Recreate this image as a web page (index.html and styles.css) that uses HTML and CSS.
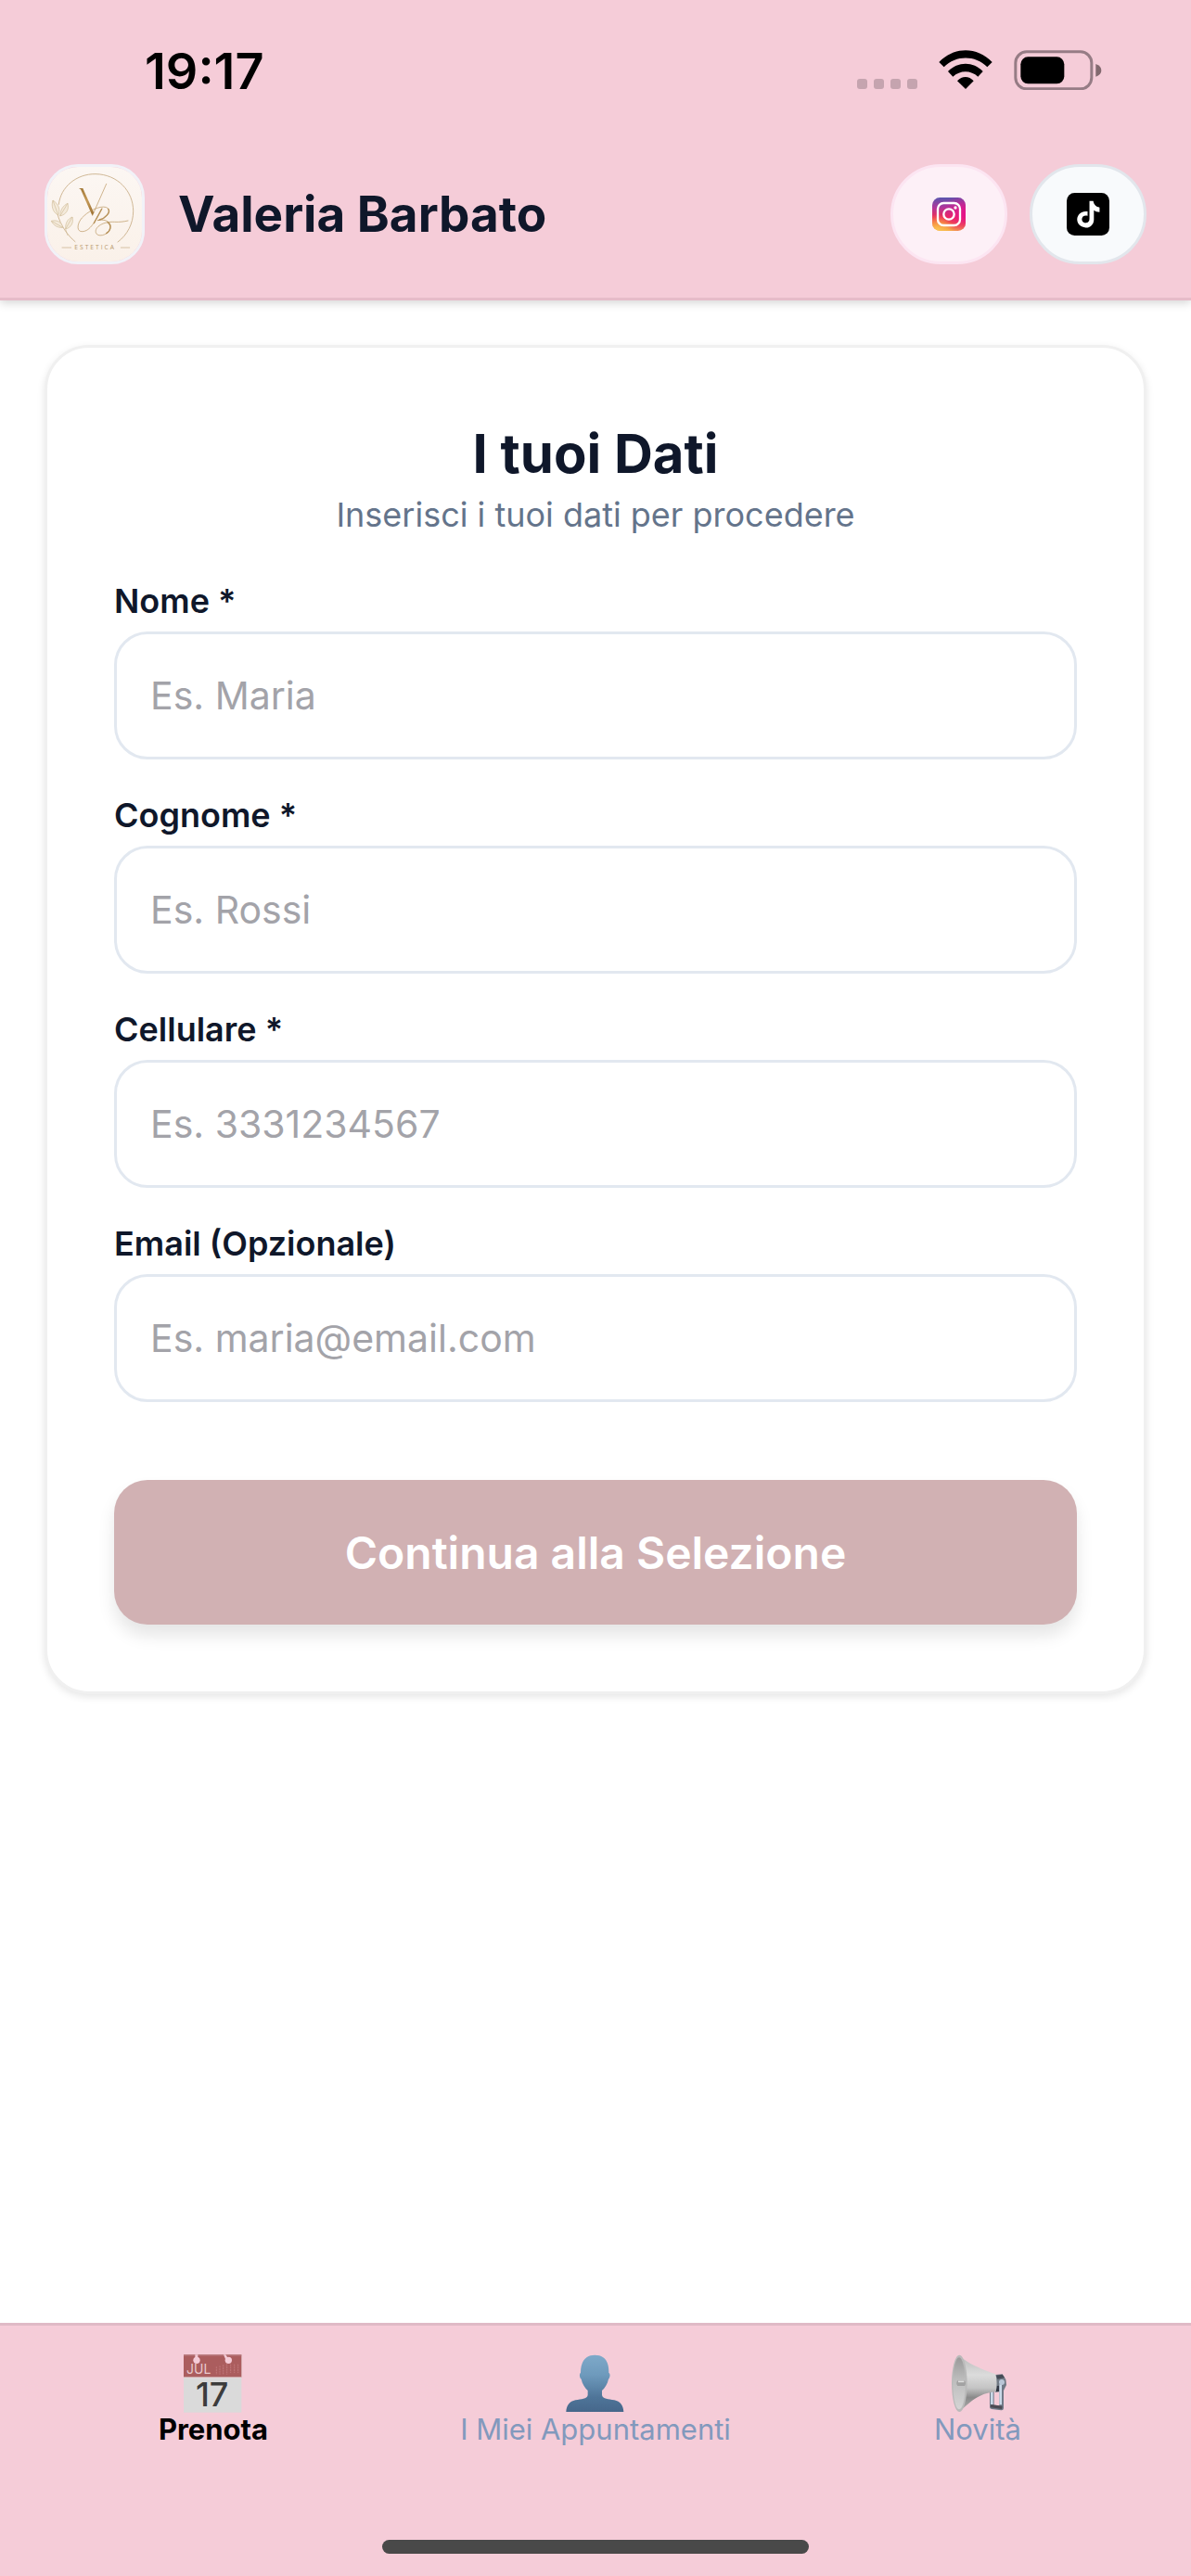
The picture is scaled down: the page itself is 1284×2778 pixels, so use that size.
FILE: index.html
```html
<!DOCTYPE html>
<html lang="it">
<head>
<meta charset="utf-8">
<meta name="viewport" content="width=device-width, initial-scale=1">
<title>Valeria Barbato</title>
<link rel="stylesheet" href="styles.css">
</head>
<body>
<header class="header">
  <div class="status">
    <time class="status-time">19:17</time>
    <div class="status-icons">
      <svg class="signal" viewBox="0 0 65 43" aria-hidden="true">
        <g fill="#c5a4af"><rect y="31" width="11" height="11" rx="3"/><rect x="18" y="31" width="11" height="11" rx="3"/><rect x="36" y="31" width="11" height="11" rx="3"/><rect x="54" y="31" width="11" height="11" rx="3"/></g>
      </svg>
      <svg class="wifi" viewBox="398 162 174 129" aria-hidden="true">
        <path d="M399 201C448 150 522 150 571 201L555 217C516 178 454 178 415 217Z"/>
        <path d="M428 231C460 198 510 198 541 231L525 248C502 226 467 226 444 248Z"/>
        <path d="M458 262C473 245 496 245 511 262L485 288Z"/>
      </svg>
      <svg class="battery" viewBox="638 161 285 129" aria-hidden="true">
        <rect x="643.500" y="166.500" width="246" height="120" rx="36" fill="none" stroke="#967c85" stroke-width="9"/>
        <rect x="660" y="183" width="141" height="87" rx="24"/>
        <path d="M903 206Q921 212 921 227Q921 241 903 247Z" fill="#82696f"/>
      </svg>
    </div>
  </div>
  <div class="brand">
    <svg class="logo" viewBox="63 60 306 306" role="img" aria-label="Logo VB Estetica">
      <defs>
        <linearGradient id="paper" x1="0" y1="0" x2="0" y2="1"><stop offset="0" stop-color="#fcf7f3"/><stop offset="1" stop-color="#faf1e9"/></linearGradient>
        <linearGradient id="gold" x1="0" y1="0" x2="1" y2="1"><stop offset="0" stop-color="#9d7434"/><stop offset=".5" stop-color="#c59a58"/><stop offset="1" stop-color="#96692b"/></linearGradient>
      </defs>
      <rect x="63" y="60" width="306" height="306" fill="url(#paper)"/>
      <g fill="none" stroke="#c6ab83" stroke-width="2.500" stroke-linecap="round">
        <path d="M100 181C106 125 157 82 219 83C291 84 341 139 341 203C341 243 322 280 291 303"/>
        <path d="M153 302C129 282 105 249 96 212"/>
        <path d="M111 321H140M301 321H329" stroke-width="2"/>
      </g>
      <g fill="#f4eadb" stroke="#d0bc98" stroke-width="2">
        <path d="M98 216C78 205 76 183 81 168C99 180 107 197 98 216Z"/>
        <path d="M104 219C106 198 114 185 129 178C134 199 124 214 104 219Z"/>
        <path d="M113 256C98 258 82 249 76 235C95 230 110 239 113 256Z"/>
        <path d="M122 261C121 241 129 228 144 222C149 241 140 256 122 261Z"/>
        <path d="M81 168L98 216M129 178L104 219M76 235L113 256M144 222L122 261M122 261L129 282" fill="none"/>
      </g>
      <path d="M165 129H178L214 209L208 217L171 133Z" fill="url(#gold)"/>
      <g fill="none" stroke="#b8935a" stroke-linecap="round">
        <path d="M209 217L254 115" stroke-width="2"/>
        <path d="M240 194C217 237 202 268 176 269C155 270 159 238 181 219C204 197 245 181 259 194C272 207 251 230 225 233C257 226 274 244 266 262C257 282 224 289 220 272C216 254 244 236 280 238C297 239 310 237 324 234" stroke-width="2"/>
        <path d="M239 196L214 242M260 196C268 207 251 226 232 231M258 239C272 249 268 266 254 275" stroke-width="4"/>
      </g>
      <text class="logo-text" x="151" y="328">ESTETICA</text>
    </svg>
    <h1 class="brand-name">Valeria Barbato</h1>
    <nav class="social" aria-label="Social">
      <a class="social-link instagram" href="#instagram" aria-label="Instagram">
        <svg class="instagram-icon" viewBox="0 0 108 108" aria-hidden="true">
          <defs>
            <linearGradient id="ig" x1="0" y1="0" x2="0" y2="1"><stop offset="0" stop-color="#5955ae"/><stop offset=".3" stop-color="#b0379b"/><stop offset=".6" stop-color="#ee2c55"/><stop offset=".82" stop-color="#f36a38"/><stop offset="1" stop-color="#f6b04a"/></linearGradient>
            <radialGradient id="pink" cx=".95" cy=".5" r=".65"><stop offset="0" stop-color="#e5138b"/><stop offset="1" stop-color="#e5138b" stop-opacity="0"/></radialGradient>
            <radialGradient id="sun" cx=".15" cy="1" r=".5"><stop offset="0" stop-color="#fbc451"/><stop offset="1" stop-color="#fbc451" stop-opacity="0"/></radialGradient>
          </defs>
          <rect width="108" height="108" rx="25" fill="url(#ig)"/><rect width="108" height="108" rx="25" fill="url(#pink)"/><rect width="108" height="108" rx="25" fill="url(#sun)"/>
          <g fill="none" stroke="#fff" stroke-width="7"><rect x="18" y="18" width="72" height="72" rx="19"/><circle cx="54" cy="54" r="17"/></g>
          <circle cx="75" cy="33" r="5" fill="#fff"/>
        </svg>
      </a>
      <a class="social-link tiktok" href="#tiktok" aria-label="TikTok">
        <svg class="tiktok-icon" viewBox="0 0 135 135" aria-hidden="true">
          <rect width="135" height="135" rx="25"/>
          <path d="M72 26H84C86 38 93 45 104 46V61C97 61 90 58 86 55V85C85 102 73 111 60 110C45 109 33 99 33 84C34 67 47 56 66 59V73C56 70 48 75 48 84C48 91 54 96 61 95C68 94 72 89 72 82Z" fill="#fff"/>
        </svg>
      </a>
    </nav>
  </div>
</header>

<main class="main">
  <form class="card">
    <h2 class="card-title">I tuoi Dati</h2>
    <p class="card-subtitle">Inserisci i tuoi dati per procedere</p>
    <div class="fields">
      <div class="field">
        <label class="label" for="nome">Nome *</label>
        <input class="input" id="nome" type="text" placeholder="Es. Maria">
      </div>
      <div class="field">
        <label class="label" for="cognome">Cognome *</label>
        <input class="input" id="cognome" type="text" placeholder="Es. Rossi">
      </div>
      <div class="field">
        <label class="label" for="cellulare">Cellulare *</label>
        <input class="input" id="cellulare" type="tel" placeholder="Es. 3331234567">
      </div>
      <div class="field">
        <label class="label" for="email">Email (Opzionale)</label>
        <input class="input" id="email" type="email" placeholder="Es. maria@email.com">
      </div>
    </div>
    <button class="submit" type="submit">Continua alla Selezione</button>
  </form>
</main>

<footer class="footer">
  <nav class="tabs" aria-label="Navigazione principale">
    <a class="tab tab-active" href="#prenota" aria-current="page">
      <svg class="tab-icon" viewBox="175 144 189 189" aria-hidden="true">
        <rect x="172" y="148" width="187" height="187" fill="#dadada"/>
        <path d="M172 148H359V221H172Z" fill="#ab5d5e"/>
        <path d="M172 150H359" stroke="#bd8085" stroke-width="3"/>
        <path d="M172 222H359" stroke="#e7d5d7" stroke-width="3"/>
        <g fill="#f5ccd8"><circle cx="214" cy="166" r="11"/><circle cx="317" cy="166" r="11"/><path d="M209 148H218V160H209ZM301 148H308L316 160L308 164Z"/></g>
        <path d="M278 187V212M289 184V212M300 181V212M312 178V212M324 179V207M336 179V207M348 179V207" stroke="#c07779" stroke-width="3" stroke-dasharray="6 2"/>
        <text class="cal-month" x="181" y="211">JUL</text>
        <text class="cal-day" x="264" y="316">17</text>
      </svg>
      <span>Prenota</span>
    </a>
    <a class="tab" href="#appuntamenti">
      <svg class="tab-icon" viewBox="391 144 189 189" aria-hidden="true">
        <defs><linearGradient id="person" x1="0" y1="0" x2="0" y2="1"><stop offset="0" stop-color="#7ea9c9"/><stop offset=".35" stop-color="#6e9abc"/><stop offset=".75" stop-color="#4e7498"/><stop offset="1" stop-color="#46678b"/></linearGradient></defs>
        <path d="M482 149C512 149 528 168 527 207C533 209 531 223 526 227C523 243 514 255 505 264V279C508 292 526 291 545 295C564 299 574 312 575 333H389C390 312 400 299 419 295C438 291 456 292 459 279V264C450 255 441 243 438 227C432 223 431 209 436 207C436 168 453 149 482 149Z" fill="url(#person)"/>
      </svg>
      <span>I Miei Appuntamenti</span>
    </a>
    <a class="tab" href="#novita">
      <svg class="tab-icon" viewBox="127 144 189 189" aria-hidden="true">
        <defs>
          <linearGradient id="horn" x1="0" y1="0" x2="0" y2="1"><stop offset="0" stop-color="#b9b9b9"/><stop offset=".35" stop-color="#dcdcdc"/><stop offset=".58" stop-color="#c4c4c4"/><stop offset=".75" stop-color="#898989"/><stop offset="1" stop-color="#b4b4b4"/></linearGradient>
          <linearGradient id="bell" x1="0" y1="0" x2="0" y2="1"><stop offset="0" stop-color="#999"/><stop offset=".4" stop-color="#bbb"/><stop offset="1" stop-color="#d5d5d5"/></linearGradient>
        </defs>
        <path d="M277 213L300 211L311 228L313 246L303 266L277 270Z" fill="#707984"/>
        <path d="M280 215L300 212L307 222L284 227Z" fill="#454b56"/>
        <path d="M282 249L291 248V267H279Z" fill="#323844"/>
        <path d="M266 262V317L297 321V237" fill="none" stroke="#707987" stroke-width="14" stroke-linejoin="round"/>
        <path d="M266 263V310M294 244V310" fill="none" stroke="#cad9e8" stroke-width="8"/>
        <path d="M262 314L299 319" stroke="#4d4b54" stroke-width="10"/>
        <circle cx="298" cy="237" r="9" fill="#b9c6d7"/>
        <path d="M161 149C175 166 206 186 278 211Q285 238 279 268C222 272 193 304 161 333Z" fill="url(#horn)"/>
        <ellipse cx="161" cy="241" rx="25" ry="92" fill="#bababa"/>
        <ellipse cx="160" cy="241" rx="20" ry="84" fill="url(#bell)"/>
        <path d="M155 232H178Q184 241 178 249H155Q148 241 155 232Z" fill="#a2a2a2"/>
        <path d="M157 235H176" stroke="#dedede" stroke-width="5"/>
      </svg>
      <span>Novità</span>
    </a>
  </nav>
  <div class="home-indicator"></div>
</footer>
</body>
</html>
```
FILE: styles.css
```css
* {
  box-sizing: border-box;
}

body {
  margin: 0;
  min-height: 100vh;
  display: flex;
  flex-direction: column;
  background: #fff;
  color: #0f172a;
  font-family: Inter, "Liberation Sans", sans-serif;
}

h1,
h2,
p {
  margin: 0;
}

svg {
  display: block;
}

/* Header */
.header {
  background: #f5ccd8;
  border-bottom: 3px solid #e6bcc9;
  box-shadow: 0 3px 9px rgba(0, 0, 0, 0.16);
}

.status {
  height: 141px;
  padding: 54px 96px 0 156px;
  display: flex;
  justify-content: space-between;
  align-items: flex-start;
}

.status-time {
  color: #000;
  font-size: 54px;
  font-weight: 600;
  line-height: 46px;
}

.status-icons {
  display: flex;
  gap: 23px;
}

.signal {
  width: 65px;
  height: 43px;
}

.wifi {
  width: 58px;
  height: 43px;
}

.battery {
  width: 95px;
  height: 43px;
}

.brand {
  padding: 36px 48px;
  display: flex;
  align-items: center;
}

.logo {
  width: 108px;
  height: 108px;
  border: 3px solid #f1f2f8;
  border-radius: 36px;
}

.logo-text {
  fill: #b8996b;
  font: 20px "Open Sans", sans-serif;
  letter-spacing: 6px;
}

.brand-name {
  flex: 1;
  margin-left: 36px;
  font-size: 53px;
  font-weight: 700;
  line-height: 66px;
}

.social {
  display: flex;
  gap: 24px;
}

.social-link {
  width: 126px;
  height: 108px;
  display: flex;
  align-items: center;
  justify-content: center;
  border: 3px solid;
  border-radius: 54px;
}

.instagram {
  background: #fdf0f7;
  border-color: #fce5f2;
}

.tiktok {
  background: #f8fafc;
  border-color: #e2e6ec;
}

.instagram-icon {
  width: 36px;
  height: 36px;
}

.tiktok-icon {
  width: 46px;
  height: 46px;
}

/* Form */
.main {
  flex: 1;
  padding: 48px;
}

.card {
  padding: 72px;
  background: #fff;
  border: 3px solid #f0f0f0;
  border-radius: 48px;
  box-shadow: 0 3px 9px rgba(0, 0, 0, 0.1);
}

.card-title {
  font-size: 58px;
  font-weight: 700;
  line-height: 84px;
  text-align: center;
}

.card-subtitle {
  margin-bottom: 45px;
  color: #64748b;
  font-size: 36px;
  line-height: 48px;
  text-align: center;
}

.fields {
  display: grid;
  gap: 36px;
}

.field {
  display: flex;
  flex-direction: column;
  gap: 9px;
}

.label {
  font-size: 36px;
  font-weight: 600;
  line-height: 48px;
}

.input {
  width: 100%;
  height: 138px;
  padding: 0 36px;
  background: #fff;
  border: 3px solid #e2e8f0;
  border-radius: 36px;
  color: #0f172a;
  font: 41px Inter, "Liberation Sans", sans-serif;
}

.input::placeholder {
  color: #a3a3a9;
  opacity: 1;
}

.submit {
  width: 100%;
  height: 156px;
  margin-top: 84px;
  background: #d1b1b3;
  border: 0;
  border-radius: 36px;
  box-shadow: 0 12px 18px rgba(0, 0, 0, 0.1);
  color: #fff;
  font: 600 48px Inter, "Liberation Sans", sans-serif;
}

/* Bottom navigation */
.footer {
  padding-bottom: 24px;
  background: #f5ccd8;
  border-top: 3px solid #dfbac6;
}

.tabs {
  padding: 30px 24px 100px;
  display: grid;
  grid-template-columns: repeat(3, 1fr);
}

.tab {
  display: flex;
  flex-direction: column;
  align-items: center;
  color: #8299bd;
  font-size: 31px;
  line-height: 38px;
  text-decoration: none;
}

.tab-active {
  color: #000;
  font-weight: 700;
}

.tab-icon {
  width: 63px;
  height: 63px;
  overflow: visible;
}

.cal-month {
  fill: #e8c9cd;
  font: 42px Inter, sans-serif;
}

.cal-day {
  fill: #3c3c3c;
  font: 500 108px Inter, sans-serif;
  text-anchor: middle;
}

.home-indicator {
  width: 460px;
  max-width: 60%;
  height: 15px;
  margin: 0 auto;
  background: #494949;
  border-radius: 8px;
}
```
